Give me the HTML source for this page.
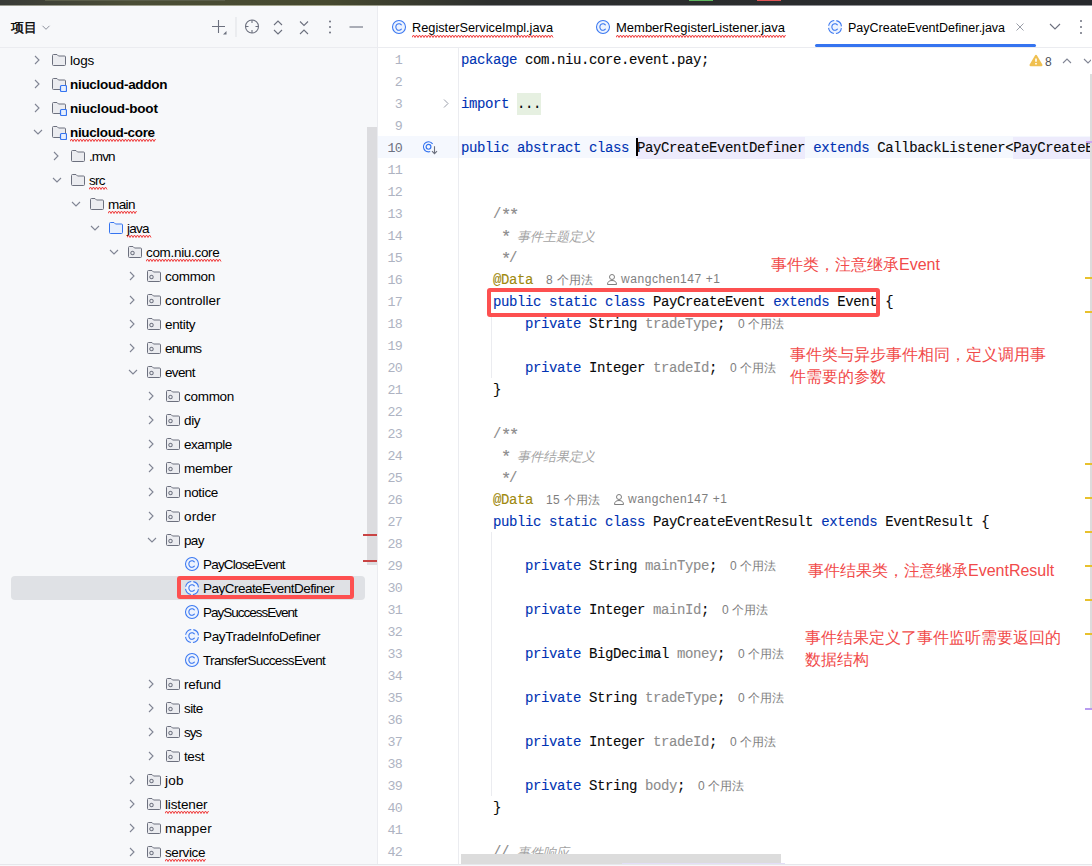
<!DOCTYPE html><html><head><meta charset="utf-8"><style>
*{margin:0;padding:0;box-sizing:border-box}
html,body{width:1092px;height:866px;overflow:hidden;background:#f7f8fa;font-family:"Liberation Sans", sans-serif}
.a{position:absolute;white-space:pre}
.t{position:absolute;white-space:pre;font-size:13px;color:#000;line-height:16px}
.tr{position:absolute;white-space:pre;font-size:13.5px;letter-spacing:-0.25px;color:#000;line-height:16px}
.c{position:absolute;white-space:pre;font-family:"Liberation Mono", monospace;font-size:14px;letter-spacing:-0.4px;line-height:22px;color:#080808;-webkit-text-stroke:0.1px currentColor}
.ln{position:absolute;font-family:"Liberation Mono", monospace;font-size:13.33px;letter-spacing:-0.7px;line-height:22px;color:#aeb3c2;text-align:right;width:40px}
.kw{color:#0033b3}
.gr{color:#8c8c8c}
.an{color:#9e880d}
.cm{color:#8c8c8c}
.ast{font-size:17px;letter-spacing:-2.2px;position:relative;top:2px;-webkit-text-stroke:0.2px currentColor}
.ci{font-style:italic;color:#a3a3a3;-webkit-text-stroke:0;font-size:13px;letter-spacing:0;position:relative;top:1px}
.hint{font-family:"Liberation Sans", sans-serif;font-size:12px;color:#7e7e7e}
.red{position:absolute;white-space:pre;color:#f14a4a;font-size:16px;line-height:21.5px}
</style></head><body>

<div class="a" style="left:0;top:0;width:1092px;height:5px;background:linear-gradient(90deg,#393b37 0%,#4b4e36 12%,#46492f 30%,#2d2f2e 45%,#27292d 100%)"></div>
<div class="a" style="left:45px;top:0;width:180px;height:1px;background:#5b5e4a"></div>
<div class="a" style="left:689px;top:0;width:24px;height:1px;background:#5fb760"></div>
<div class="a" style="left:757px;top:0;width:24px;height:1px;background:#e05555"></div>
<div class="a" style="left:0;top:5px;width:1092px;height:1px;background:linear-gradient(90deg,#9a9b90 0%,#a2a38a 30%,#8f9094 45%,#8f9094 100%)"></div>
<div class="a" style="left:0;top:47px;width:378px;height:1px;background:#ebecf0"></div>
<div class="t" style="left:11px;top:20px;font-size:12.5px;font-weight:normal;color:#000;-webkit-text-stroke:0.35px #000">项目</div>
<svg class="a" style="left:41px;top:24px" width="10" height="8" viewBox="0 0 10 8"><path d="M1.5 1.8 L5 5.3 L8.5 1.8" fill="none" stroke="#8c909c" stroke-width="1"/></svg>
<svg class="a" style="left:208px;top:17px" width="160" height="20" viewBox="0 0 160 20"><path d="M4 9.5 H17 M10.5 3 V16" stroke="#6c707e" stroke-width="1.1" fill="none"/><path d="M15 17.5 L18.5 17.5 L18.5 14 Z" fill="#6c707e"/><path d="M28 0 V20" stroke="#dfe1e5" stroke-width="1"/><circle cx="44" cy="9.5" r="6.5" stroke="#6c707e" stroke-width="1.1" fill="none"/><path d="M44 3 V6 M44 13 V16 M37.5 9.5 H40.5 M47.5 9.5 H50.5" stroke="#6c707e" stroke-width="1.1"/><path d="M66 8 L70 4 L74 8 M66 13 L70 17 L74 13" stroke="#6c707e" stroke-width="1.1" fill="none"/><path d="M92 4.5 L96 8.5 L100 4.5 M92 17 L96 13 L100 17" stroke="#6c707e" stroke-width="1.1" fill="none"/><circle cx="122" cy="4.5" r="1" fill="#6c707e"/><circle cx="122" cy="10" r="1" fill="#6c707e"/><circle cx="122" cy="15.5" r="1" fill="#6c707e"/><path d="M141.5 10 H155" stroke="#6c707e" stroke-width="1.1"/></svg>
<div class="a" style="left:11px;top:576px;width:354px;height:24px;background:#dfe1e5;border-radius:4px"></div>
<div class="a" style="left:367px;top:127px;width:10px;height:438px;background:#dcdcdf"></div>
<div class="a" style="left:363px;top:534px;width:15px;height:2px;background:#c94444"></div>
<div class="a" style="left:363px;top:560px;width:15px;height:2px;background:#c94444"></div>
<svg style="position:absolute;left:33px;top:54px" width="8" height="12" viewBox="0 0 8 12"><path d="M2 2 L6 6 L2 10" fill="none" stroke="#818594" stroke-width="1.1"/></svg>
<svg style="position:absolute;left:51px;top:53px" width="16" height="16" viewBox="0 0 16 16"><path d="M1.5 2.5 Q1.5 1.5 2.5 1.5 H6 L7.5 3 H13.5 Q14.5 3 14.5 4 V11.5 Q14.5 12.5 13.5 12.5 H2.5 Q1.5 12.5 1.5 11.5 Z" fill="#ebecf0" stroke="#6c707e" stroke-width="1"/></svg>
<div class="tr" style="left:70px;top:53px;font-weight:normal;letter-spacing:-0.15px">logs</div>
<svg style="position:absolute;left:33px;top:78px" width="8" height="12" viewBox="0 0 8 12"><path d="M2 2 L6 6 L2 10" fill="none" stroke="#818594" stroke-width="1.1"/></svg>
<svg style="position:absolute;left:51px;top:77px" width="16" height="16" viewBox="0 0 16 16"><path d="M1.5 2.5 Q1.5 1.5 2.5 1.5 H6 L7.5 3 H13.5 Q14.5 3 14.5 4 V11.5 Q14.5 12.5 13.5 12.5 H2.5 Q1.5 12.5 1.5 11.5 Z" fill="#ebecf0" stroke="#6c707e" stroke-width="1"/><rect x="9.5" y="8.5" width="6" height="6" rx="1" fill="#e7effd" stroke="#3574f0" stroke-width="1.2"/></svg>
<div class="tr" style="left:70px;top:77px;font-weight:bold;letter-spacing:-0.29px">niucloud-addon</div>
<svg style="position:absolute;left:33px;top:102px" width="8" height="12" viewBox="0 0 8 12"><path d="M2 2 L6 6 L2 10" fill="none" stroke="#818594" stroke-width="1.1"/></svg>
<svg style="position:absolute;left:51px;top:101px" width="16" height="16" viewBox="0 0 16 16"><path d="M1.5 2.5 Q1.5 1.5 2.5 1.5 H6 L7.5 3 H13.5 Q14.5 3 14.5 4 V11.5 Q14.5 12.5 13.5 12.5 H2.5 Q1.5 12.5 1.5 11.5 Z" fill="#ebecf0" stroke="#6c707e" stroke-width="1"/><rect x="9.5" y="8.5" width="6" height="6" rx="1" fill="#e7effd" stroke="#3574f0" stroke-width="1.2"/></svg>
<div class="tr" style="left:70px;top:101px;font-weight:bold;letter-spacing:-0.17px">niucloud-boot</div>
<svg style="position:absolute;left:32px;top:128px" width="12" height="8" viewBox="0 0 12 8"><path d="M2 2 L6 6 L10 2" fill="none" stroke="#818594" stroke-width="1.1"/></svg>
<svg style="position:absolute;left:51px;top:125px" width="16" height="16" viewBox="0 0 16 16"><path d="M1.5 2.5 Q1.5 1.5 2.5 1.5 H6 L7.5 3 H13.5 Q14.5 3 14.5 4 V11.5 Q14.5 12.5 13.5 12.5 H2.5 Q1.5 12.5 1.5 11.5 Z" fill="#ebecf0" stroke="#6c707e" stroke-width="1"/><rect x="9.5" y="8.5" width="6" height="6" rx="1" fill="#e7effd" stroke="#3574f0" stroke-width="1.2"/></svg>
<div class="tr" style="left:70px;top:125px;font-weight:bold;letter-spacing:-0.35px">niucloud-core</div>
<svg style="position:absolute;left:52px;top:150px" width="8" height="12" viewBox="0 0 8 12"><path d="M2 2 L6 6 L2 10" fill="none" stroke="#818594" stroke-width="1.1"/></svg>
<svg style="position:absolute;left:70px;top:149px" width="16" height="16" viewBox="0 0 16 16"><path d="M1.5 2.5 Q1.5 1.5 2.5 1.5 H6 L7.5 3 H13.5 Q14.5 3 14.5 4 V11.5 Q14.5 12.5 13.5 12.5 H2.5 Q1.5 12.5 1.5 11.5 Z" fill="#ebecf0" stroke="#6c707e" stroke-width="1"/></svg>
<div class="tr" style="left:89px;top:149px;font-weight:normal;letter-spacing:-0.88px">.mvn</div>
<svg style="position:absolute;left:51px;top:176px" width="12" height="8" viewBox="0 0 12 8"><path d="M2 2 L6 6 L10 2" fill="none" stroke="#818594" stroke-width="1.1"/></svg>
<svg style="position:absolute;left:70px;top:173px" width="16" height="16" viewBox="0 0 16 16"><path d="M1.5 2.5 Q1.5 1.5 2.5 1.5 H6 L7.5 3 H13.5 Q14.5 3 14.5 4 V11.5 Q14.5 12.5 13.5 12.5 H2.5 Q1.5 12.5 1.5 11.5 Z" fill="#ebecf0" stroke="#6c707e" stroke-width="1"/></svg>
<div class="tr" style="left:89px;top:173px;font-weight:normal;letter-spacing:-0.75px">src</div>
<svg style="position:absolute;left:70px;top:200px" width="12" height="8" viewBox="0 0 12 8"><path d="M2 2 L6 6 L10 2" fill="none" stroke="#818594" stroke-width="1.1"/></svg>
<svg style="position:absolute;left:89px;top:197px" width="16" height="16" viewBox="0 0 16 16"><path d="M1.5 2.5 Q1.5 1.5 2.5 1.5 H6 L7.5 3 H13.5 Q14.5 3 14.5 4 V11.5 Q14.5 12.5 13.5 12.5 H2.5 Q1.5 12.5 1.5 11.5 Z" fill="#ebecf0" stroke="#6c707e" stroke-width="1"/></svg>
<div class="tr" style="left:108px;top:197px;font-weight:normal;letter-spacing:-0.58px">main</div>
<svg style="position:absolute;left:89px;top:224px" width="12" height="8" viewBox="0 0 12 8"><path d="M2 2 L6 6 L10 2" fill="none" stroke="#818594" stroke-width="1.1"/></svg>
<svg style="position:absolute;left:108px;top:221px" width="16" height="16" viewBox="0 0 16 16"><path d="M1.5 2.5 Q1.5 1.5 2.5 1.5 H6 L7.5 3 H13.5 Q14.5 3 14.5 4 V11.5 Q14.5 12.5 13.5 12.5 H2.5 Q1.5 12.5 1.5 11.5 Z" fill="#e7effd" stroke="#3574f0" stroke-width="1"/></svg>
<div class="tr" style="left:127px;top:221px;font-weight:normal;letter-spacing:-0.75px">java</div>
<svg style="position:absolute;left:108px;top:248px" width="12" height="8" viewBox="0 0 12 8"><path d="M2 2 L6 6 L10 2" fill="none" stroke="#818594" stroke-width="1.1"/></svg>
<svg style="position:absolute;left:127px;top:245px" width="16" height="16" viewBox="0 0 16 16"><path d="M1.5 2.5 Q1.5 1.5 2.5 1.5 H6 L7.5 3 H13.5 Q14.5 3 14.5 4 V11.5 Q14.5 12.5 13.5 12.5 H2.5 Q1.5 12.5 1.5 11.5 Z" fill="#ebecf0" stroke="#6c707e" stroke-width="1"/><circle cx="5.5" cy="8" r="1.7" fill="none" stroke="#6c707e" stroke-width="1.05"/></svg>
<div class="tr" style="left:146px;top:245px;font-weight:normal;letter-spacing:-0.32px">com.niu.core</div>
<svg style="position:absolute;left:128px;top:270px" width="8" height="12" viewBox="0 0 8 12"><path d="M2 2 L6 6 L2 10" fill="none" stroke="#818594" stroke-width="1.1"/></svg>
<svg style="position:absolute;left:146px;top:269px" width="16" height="16" viewBox="0 0 16 16"><path d="M1.5 2.5 Q1.5 1.5 2.5 1.5 H6 L7.5 3 H13.5 Q14.5 3 14.5 4 V11.5 Q14.5 12.5 13.5 12.5 H2.5 Q1.5 12.5 1.5 11.5 Z" fill="#ebecf0" stroke="#6c707e" stroke-width="1"/><circle cx="5.5" cy="8" r="1.7" fill="none" stroke="#6c707e" stroke-width="1.05"/></svg>
<div class="tr" style="left:165px;top:269px;font-weight:normal;letter-spacing:-0.29px">common</div>
<svg style="position:absolute;left:128px;top:294px" width="8" height="12" viewBox="0 0 8 12"><path d="M2 2 L6 6 L2 10" fill="none" stroke="#818594" stroke-width="1.1"/></svg>
<svg style="position:absolute;left:146px;top:293px" width="16" height="16" viewBox="0 0 16 16"><path d="M1.5 2.5 Q1.5 1.5 2.5 1.5 H6 L7.5 3 H13.5 Q14.5 3 14.5 4 V11.5 Q14.5 12.5 13.5 12.5 H2.5 Q1.5 12.5 1.5 11.5 Z" fill="#ebecf0" stroke="#6c707e" stroke-width="1"/><circle cx="5.5" cy="8" r="1.7" fill="none" stroke="#6c707e" stroke-width="1.05"/></svg>
<div class="tr" style="left:165px;top:293px;font-weight:normal;letter-spacing:-0.01px">controller</div>
<svg style="position:absolute;left:128px;top:318px" width="8" height="12" viewBox="0 0 8 12"><path d="M2 2 L6 6 L2 10" fill="none" stroke="#818594" stroke-width="1.1"/></svg>
<svg style="position:absolute;left:146px;top:317px" width="16" height="16" viewBox="0 0 16 16"><path d="M1.5 2.5 Q1.5 1.5 2.5 1.5 H6 L7.5 3 H13.5 Q14.5 3 14.5 4 V11.5 Q14.5 12.5 13.5 12.5 H2.5 Q1.5 12.5 1.5 11.5 Z" fill="#ebecf0" stroke="#6c707e" stroke-width="1"/><circle cx="5.5" cy="8" r="1.7" fill="none" stroke="#6c707e" stroke-width="1.05"/></svg>
<div class="tr" style="left:165px;top:317px;font-weight:normal;letter-spacing:-0.33px">entity</div>
<svg style="position:absolute;left:128px;top:342px" width="8" height="12" viewBox="0 0 8 12"><path d="M2 2 L6 6 L2 10" fill="none" stroke="#818594" stroke-width="1.1"/></svg>
<svg style="position:absolute;left:146px;top:341px" width="16" height="16" viewBox="0 0 16 16"><path d="M1.5 2.5 Q1.5 1.5 2.5 1.5 H6 L7.5 3 H13.5 Q14.5 3 14.5 4 V11.5 Q14.5 12.5 13.5 12.5 H2.5 Q1.5 12.5 1.5 11.5 Z" fill="#ebecf0" stroke="#6c707e" stroke-width="1"/><circle cx="5.5" cy="8" r="1.7" fill="none" stroke="#6c707e" stroke-width="1.05"/></svg>
<div class="tr" style="left:165px;top:341px;font-weight:normal;letter-spacing:-0.88px">enums</div>
<svg style="position:absolute;left:127px;top:368px" width="12" height="8" viewBox="0 0 12 8"><path d="M2 2 L6 6 L10 2" fill="none" stroke="#818594" stroke-width="1.1"/></svg>
<svg style="position:absolute;left:146px;top:365px" width="16" height="16" viewBox="0 0 16 16"><path d="M1.5 2.5 Q1.5 1.5 2.5 1.5 H6 L7.5 3 H13.5 Q14.5 3 14.5 4 V11.5 Q14.5 12.5 13.5 12.5 H2.5 Q1.5 12.5 1.5 11.5 Z" fill="#ebecf0" stroke="#6c707e" stroke-width="1"/><circle cx="5.5" cy="8" r="1.7" fill="none" stroke="#6c707e" stroke-width="1.05"/></svg>
<div class="tr" style="left:165px;top:365px;font-weight:normal;letter-spacing:-0.65px">event</div>
<svg style="position:absolute;left:147px;top:390px" width="8" height="12" viewBox="0 0 8 12"><path d="M2 2 L6 6 L2 10" fill="none" stroke="#818594" stroke-width="1.1"/></svg>
<svg style="position:absolute;left:165px;top:389px" width="16" height="16" viewBox="0 0 16 16"><path d="M1.5 2.5 Q1.5 1.5 2.5 1.5 H6 L7.5 3 H13.5 Q14.5 3 14.5 4 V11.5 Q14.5 12.5 13.5 12.5 H2.5 Q1.5 12.5 1.5 11.5 Z" fill="#ebecf0" stroke="#6c707e" stroke-width="1"/><circle cx="5.5" cy="8" r="1.7" fill="none" stroke="#6c707e" stroke-width="1.05"/></svg>
<div class="tr" style="left:184px;top:389px;font-weight:normal;letter-spacing:-0.29px">common</div>
<svg style="position:absolute;left:147px;top:414px" width="8" height="12" viewBox="0 0 8 12"><path d="M2 2 L6 6 L2 10" fill="none" stroke="#818594" stroke-width="1.1"/></svg>
<svg style="position:absolute;left:165px;top:413px" width="16" height="16" viewBox="0 0 16 16"><path d="M1.5 2.5 Q1.5 1.5 2.5 1.5 H6 L7.5 3 H13.5 Q14.5 3 14.5 4 V11.5 Q14.5 12.5 13.5 12.5 H2.5 Q1.5 12.5 1.5 11.5 Z" fill="#ebecf0" stroke="#6c707e" stroke-width="1"/><circle cx="5.5" cy="8" r="1.7" fill="none" stroke="#6c707e" stroke-width="1.05"/></svg>
<div class="tr" style="left:184px;top:413px;font-weight:normal;letter-spacing:-0.32px">diy</div>
<svg style="position:absolute;left:147px;top:438px" width="8" height="12" viewBox="0 0 8 12"><path d="M2 2 L6 6 L2 10" fill="none" stroke="#818594" stroke-width="1.1"/></svg>
<svg style="position:absolute;left:165px;top:437px" width="16" height="16" viewBox="0 0 16 16"><path d="M1.5 2.5 Q1.5 1.5 2.5 1.5 H6 L7.5 3 H13.5 Q14.5 3 14.5 4 V11.5 Q14.5 12.5 13.5 12.5 H2.5 Q1.5 12.5 1.5 11.5 Z" fill="#ebecf0" stroke="#6c707e" stroke-width="1"/><circle cx="5.5" cy="8" r="1.7" fill="none" stroke="#6c707e" stroke-width="1.05"/></svg>
<div class="tr" style="left:184px;top:437px;font-weight:normal;letter-spacing:-0.45px">example</div>
<svg style="position:absolute;left:147px;top:462px" width="8" height="12" viewBox="0 0 8 12"><path d="M2 2 L6 6 L2 10" fill="none" stroke="#818594" stroke-width="1.1"/></svg>
<svg style="position:absolute;left:165px;top:461px" width="16" height="16" viewBox="0 0 16 16"><path d="M1.5 2.5 Q1.5 1.5 2.5 1.5 H6 L7.5 3 H13.5 Q14.5 3 14.5 4 V11.5 Q14.5 12.5 13.5 12.5 H2.5 Q1.5 12.5 1.5 11.5 Z" fill="#ebecf0" stroke="#6c707e" stroke-width="1"/><circle cx="5.5" cy="8" r="1.7" fill="none" stroke="#6c707e" stroke-width="1.05"/></svg>
<div class="tr" style="left:184px;top:461px;font-weight:normal;letter-spacing:-0.2px">member</div>
<svg style="position:absolute;left:147px;top:486px" width="8" height="12" viewBox="0 0 8 12"><path d="M2 2 L6 6 L2 10" fill="none" stroke="#818594" stroke-width="1.1"/></svg>
<svg style="position:absolute;left:165px;top:485px" width="16" height="16" viewBox="0 0 16 16"><path d="M1.5 2.5 Q1.5 1.5 2.5 1.5 H6 L7.5 3 H13.5 Q14.5 3 14.5 4 V11.5 Q14.5 12.5 13.5 12.5 H2.5 Q1.5 12.5 1.5 11.5 Z" fill="#ebecf0" stroke="#6c707e" stroke-width="1"/><circle cx="5.5" cy="8" r="1.7" fill="none" stroke="#6c707e" stroke-width="1.05"/></svg>
<div class="tr" style="left:184px;top:485px;font-weight:normal;letter-spacing:-0.34px">notice</div>
<svg style="position:absolute;left:147px;top:510px" width="8" height="12" viewBox="0 0 8 12"><path d="M2 2 L6 6 L2 10" fill="none" stroke="#818594" stroke-width="1.1"/></svg>
<svg style="position:absolute;left:165px;top:509px" width="16" height="16" viewBox="0 0 16 16"><path d="M1.5 2.5 Q1.5 1.5 2.5 1.5 H6 L7.5 3 H13.5 Q14.5 3 14.5 4 V11.5 Q14.5 12.5 13.5 12.5 H2.5 Q1.5 12.5 1.5 11.5 Z" fill="#ebecf0" stroke="#6c707e" stroke-width="1"/><circle cx="5.5" cy="8" r="1.7" fill="none" stroke="#6c707e" stroke-width="1.05"/></svg>
<div class="tr" style="left:184px;top:509px;font-weight:normal;letter-spacing:0.12px">order</div>
<svg style="position:absolute;left:146px;top:536px" width="12" height="8" viewBox="0 0 12 8"><path d="M2 2 L6 6 L10 2" fill="none" stroke="#818594" stroke-width="1.1"/></svg>
<svg style="position:absolute;left:165px;top:533px" width="16" height="16" viewBox="0 0 16 16"><path d="M1.5 2.5 Q1.5 1.5 2.5 1.5 H6 L7.5 3 H13.5 Q14.5 3 14.5 4 V11.5 Q14.5 12.5 13.5 12.5 H2.5 Q1.5 12.5 1.5 11.5 Z" fill="#ebecf0" stroke="#6c707e" stroke-width="1"/><circle cx="5.5" cy="8" r="1.7" fill="none" stroke="#6c707e" stroke-width="1.05"/></svg>
<div class="tr" style="left:184px;top:533px;font-weight:normal;letter-spacing:-0.68px">pay</div>
<svg style="position:absolute;left:184px;top:556px" width="16" height="16" viewBox="0 0 16 16"><circle cx="8" cy="8" r="6.5" fill="#edf3fe" stroke="#3b78f1" stroke-width="1.05"/><path d="M10.6 6.3 A3.1 3.3 0 1 0 10.6 9.7" fill="none" stroke="#3574f0" stroke-width="1.05"/></svg>
<div class="tr" style="left:203px;top:557px;font-weight:normal;letter-spacing:-0.81px">PayCloseEvent</div>
<svg style="position:absolute;left:184px;top:580px" width="16" height="16" viewBox="0 0 16 16"><circle cx="8" cy="8" r="6.5" fill="#edf3fe" stroke="#3b78f1" stroke-width="1.05" stroke-dasharray="7.85 2.2" stroke-dashoffset="8.95"/><path d="M10.6 6.3 A3.1 3.3 0 1 0 10.6 9.7" fill="none" stroke="#3574f0" stroke-width="1.05"/></svg>
<div class="tr" style="left:203px;top:581px;font-weight:normal;letter-spacing:-0.52px">PayCreateEventDefiner</div>
<svg style="position:absolute;left:184px;top:604px" width="16" height="16" viewBox="0 0 16 16"><circle cx="8" cy="8" r="6.5" fill="#edf3fe" stroke="#3b78f1" stroke-width="1.05"/><path d="M10.6 6.3 A3.1 3.3 0 1 0 10.6 9.7" fill="none" stroke="#3574f0" stroke-width="1.05"/></svg>
<div class="tr" style="left:203px;top:605px;font-weight:normal;letter-spacing:-1.0px">PaySuccessEvent</div>
<svg style="position:absolute;left:184px;top:628px" width="16" height="16" viewBox="0 0 16 16"><circle cx="8" cy="8" r="6.5" fill="#edf3fe" stroke="#3b78f1" stroke-width="1.05" stroke-dasharray="7.85 2.2" stroke-dashoffset="8.95"/><path d="M10.6 6.3 A3.1 3.3 0 1 0 10.6 9.7" fill="none" stroke="#3574f0" stroke-width="1.05"/></svg>
<div class="tr" style="left:203px;top:629px;font-weight:normal;letter-spacing:-0.37px">PayTradeInfoDefiner</div>
<svg style="position:absolute;left:184px;top:652px" width="16" height="16" viewBox="0 0 16 16"><circle cx="8" cy="8" r="6.5" fill="#edf3fe" stroke="#3b78f1" stroke-width="1.05"/><path d="M10.6 6.3 A3.1 3.3 0 1 0 10.6 9.7" fill="none" stroke="#3574f0" stroke-width="1.05"/></svg>
<div class="tr" style="left:203px;top:653px;font-weight:normal;letter-spacing:-0.66px">TransferSuccessEvent</div>
<svg style="position:absolute;left:147px;top:678px" width="8" height="12" viewBox="0 0 8 12"><path d="M2 2 L6 6 L2 10" fill="none" stroke="#818594" stroke-width="1.1"/></svg>
<svg style="position:absolute;left:165px;top:677px" width="16" height="16" viewBox="0 0 16 16"><path d="M1.5 2.5 Q1.5 1.5 2.5 1.5 H6 L7.5 3 H13.5 Q14.5 3 14.5 4 V11.5 Q14.5 12.5 13.5 12.5 H2.5 Q1.5 12.5 1.5 11.5 Z" fill="#ebecf0" stroke="#6c707e" stroke-width="1"/><circle cx="5.5" cy="8" r="1.7" fill="none" stroke="#6c707e" stroke-width="1.05"/></svg>
<div class="tr" style="left:184px;top:677px;font-weight:normal;letter-spacing:-0.25px">refund</div>
<svg style="position:absolute;left:147px;top:702px" width="8" height="12" viewBox="0 0 8 12"><path d="M2 2 L6 6 L2 10" fill="none" stroke="#818594" stroke-width="1.1"/></svg>
<svg style="position:absolute;left:165px;top:701px" width="16" height="16" viewBox="0 0 16 16"><path d="M1.5 2.5 Q1.5 1.5 2.5 1.5 H6 L7.5 3 H13.5 Q14.5 3 14.5 4 V11.5 Q14.5 12.5 13.5 12.5 H2.5 Q1.5 12.5 1.5 11.5 Z" fill="#ebecf0" stroke="#6c707e" stroke-width="1"/><circle cx="5.5" cy="8" r="1.7" fill="none" stroke="#6c707e" stroke-width="1.05"/></svg>
<div class="tr" style="left:184px;top:701px;font-weight:normal;letter-spacing:-0.57px">site</div>
<svg style="position:absolute;left:147px;top:726px" width="8" height="12" viewBox="0 0 8 12"><path d="M2 2 L6 6 L2 10" fill="none" stroke="#818594" stroke-width="1.1"/></svg>
<svg style="position:absolute;left:165px;top:725px" width="16" height="16" viewBox="0 0 16 16"><path d="M1.5 2.5 Q1.5 1.5 2.5 1.5 H6 L7.5 3 H13.5 Q14.5 3 14.5 4 V11.5 Q14.5 12.5 13.5 12.5 H2.5 Q1.5 12.5 1.5 11.5 Z" fill="#ebecf0" stroke="#6c707e" stroke-width="1"/><circle cx="5.5" cy="8" r="1.7" fill="none" stroke="#6c707e" stroke-width="1.05"/></svg>
<div class="tr" style="left:184px;top:725px;font-weight:normal;letter-spacing:-1.0px">sys</div>
<svg style="position:absolute;left:147px;top:750px" width="8" height="12" viewBox="0 0 8 12"><path d="M2 2 L6 6 L2 10" fill="none" stroke="#818594" stroke-width="1.1"/></svg>
<svg style="position:absolute;left:165px;top:749px" width="16" height="16" viewBox="0 0 16 16"><path d="M1.5 2.5 Q1.5 1.5 2.5 1.5 H6 L7.5 3 H13.5 Q14.5 3 14.5 4 V11.5 Q14.5 12.5 13.5 12.5 H2.5 Q1.5 12.5 1.5 11.5 Z" fill="#ebecf0" stroke="#6c707e" stroke-width="1"/><circle cx="5.5" cy="8" r="1.7" fill="none" stroke="#6c707e" stroke-width="1.05"/></svg>
<div class="tr" style="left:184px;top:749px;font-weight:normal;letter-spacing:-0.38px">test</div>
<svg style="position:absolute;left:128px;top:774px" width="8" height="12" viewBox="0 0 8 12"><path d="M2 2 L6 6 L2 10" fill="none" stroke="#818594" stroke-width="1.1"/></svg>
<svg style="position:absolute;left:146px;top:773px" width="16" height="16" viewBox="0 0 16 16"><path d="M1.5 2.5 Q1.5 1.5 2.5 1.5 H6 L7.5 3 H13.5 Q14.5 3 14.5 4 V11.5 Q14.5 12.5 13.5 12.5 H2.5 Q1.5 12.5 1.5 11.5 Z" fill="#ebecf0" stroke="#6c707e" stroke-width="1"/><circle cx="5.5" cy="8" r="1.7" fill="none" stroke="#6c707e" stroke-width="1.05"/></svg>
<div class="tr" style="left:165px;top:773px;font-weight:normal;letter-spacing:0.3px">job</div>
<svg style="position:absolute;left:128px;top:798px" width="8" height="12" viewBox="0 0 8 12"><path d="M2 2 L6 6 L2 10" fill="none" stroke="#818594" stroke-width="1.1"/></svg>
<svg style="position:absolute;left:146px;top:797px" width="16" height="16" viewBox="0 0 16 16"><path d="M1.5 2.5 Q1.5 1.5 2.5 1.5 H6 L7.5 3 H13.5 Q14.5 3 14.5 4 V11.5 Q14.5 12.5 13.5 12.5 H2.5 Q1.5 12.5 1.5 11.5 Z" fill="#ebecf0" stroke="#6c707e" stroke-width="1"/><circle cx="5.5" cy="8" r="1.7" fill="none" stroke="#6c707e" stroke-width="1.05"/></svg>
<div class="tr" style="left:165px;top:797px;font-weight:normal;letter-spacing:-0.13px">listener</div>
<svg style="position:absolute;left:128px;top:822px" width="8" height="12" viewBox="0 0 8 12"><path d="M2 2 L6 6 L2 10" fill="none" stroke="#818594" stroke-width="1.1"/></svg>
<svg style="position:absolute;left:146px;top:821px" width="16" height="16" viewBox="0 0 16 16"><path d="M1.5 2.5 Q1.5 1.5 2.5 1.5 H6 L7.5 3 H13.5 Q14.5 3 14.5 4 V11.5 Q14.5 12.5 13.5 12.5 H2.5 Q1.5 12.5 1.5 11.5 Z" fill="#ebecf0" stroke="#6c707e" stroke-width="1"/><circle cx="5.5" cy="8" r="1.7" fill="none" stroke="#6c707e" stroke-width="1.05"/></svg>
<div class="tr" style="left:165px;top:821px;font-weight:normal;letter-spacing:0.17px">mapper</div>
<svg style="position:absolute;left:128px;top:846px" width="8" height="12" viewBox="0 0 8 12"><path d="M2 2 L6 6 L2 10" fill="none" stroke="#818594" stroke-width="1.1"/></svg>
<svg style="position:absolute;left:146px;top:845px" width="16" height="16" viewBox="0 0 16 16"><path d="M1.5 2.5 Q1.5 1.5 2.5 1.5 H6 L7.5 3 H13.5 Q14.5 3 14.5 4 V11.5 Q14.5 12.5 13.5 12.5 H2.5 Q1.5 12.5 1.5 11.5 Z" fill="#ebecf0" stroke="#6c707e" stroke-width="1"/><circle cx="5.5" cy="8" r="1.7" fill="none" stroke="#6c707e" stroke-width="1.05"/></svg>
<div class="tr" style="left:165px;top:845px;font-weight:normal;letter-spacing:-0.39px">service</div>
<svg class="a" style="left:70px;top:138px" width="87" height="5" viewBox="0 0 87 5"><path d="M0 3.5 L1.5 1 L3.0 3.5 L4.5 1 L6.0 3.5 L7.5 1 L9.0 3.5 L10.5 1 L12.0 3.5 L13.5 1 L15.0 3.5 L16.5 1 L18.0 3.5 L19.5 1 L21.0 3.5 L22.5 1 L24.0 3.5 L25.5 1 L27.0 3.5 L28.5 1 L30.0 3.5 L31.5 1 L33.0 3.5 L34.5 1 L36.0 3.5 L37.5 1 L39.0 3.5 L40.5 1 L42.0 3.5 L43.5 1 L45.0 3.5 L46.5 1 L48.0 3.5 L49.5 1 L51.0 3.5 L52.5 1 L54.0 3.5 L55.5 1 L57.0 3.5 L58.5 1 L60.0 3.5 L61.5 1 L63.0 3.5 L64.5 1 L66.0 3.5 L67.5 1 L69.0 3.5 L70.5 1 L72.0 3.5 L73.5 1 L75.0 3.5 L76.5 1 L78.0 3.5 L79.5 1 L81.0 3.5 L82.5 1 L84.0 3.5 L85.5 1" fill="none" stroke="#f03c3c" stroke-width="1"/></svg>
<svg class="a" style="left:89px;top:186px" width="19" height="5" viewBox="0 0 19 5"><path d="M0 3.5 L1.5 1 L3.0 3.5 L4.5 1 L6.0 3.5 L7.5 1 L9.0 3.5 L10.5 1 L12.0 3.5 L13.5 1 L15.0 3.5 L16.5 1 L18.0 3.5" fill="none" stroke="#f03c3c" stroke-width="1"/></svg>
<svg class="a" style="left:108px;top:210px" width="30" height="5" viewBox="0 0 30 5"><path d="M0 3.5 L1.5 1 L3.0 3.5 L4.5 1 L6.0 3.5 L7.5 1 L9.0 3.5 L10.5 1 L12.0 3.5 L13.5 1 L15.0 3.5 L16.5 1 L18.0 3.5 L19.5 1 L21.0 3.5 L22.5 1 L24.0 3.5 L25.5 1 L27.0 3.5 L28.5 1" fill="none" stroke="#f03c3c" stroke-width="1"/></svg>
<svg class="a" style="left:127px;top:234px" width="25" height="5" viewBox="0 0 25 5"><path d="M0 3.5 L1.5 1 L3.0 3.5 L4.5 1 L6.0 3.5 L7.5 1 L9.0 3.5 L10.5 1 L12.0 3.5 L13.5 1 L15.0 3.5 L16.5 1 L18.0 3.5 L19.5 1 L21.0 3.5 L22.5 1 L24.0 3.5" fill="none" stroke="#f03c3c" stroke-width="1"/></svg>
<svg class="a" style="left:146px;top:258px" width="76" height="5" viewBox="0 0 76 5"><path d="M0 3.5 L1.5 1 L3.0 3.5 L4.5 1 L6.0 3.5 L7.5 1 L9.0 3.5 L10.5 1 L12.0 3.5 L13.5 1 L15.0 3.5 L16.5 1 L18.0 3.5 L19.5 1 L21.0 3.5 L22.5 1 L24.0 3.5 L25.5 1 L27.0 3.5 L28.5 1 L30.0 3.5 L31.5 1 L33.0 3.5 L34.5 1 L36.0 3.5 L37.5 1 L39.0 3.5 L40.5 1 L42.0 3.5 L43.5 1 L45.0 3.5 L46.5 1 L48.0 3.5 L49.5 1 L51.0 3.5 L52.5 1 L54.0 3.5 L55.5 1 L57.0 3.5 L58.5 1 L60.0 3.5 L61.5 1 L63.0 3.5 L64.5 1 L66.0 3.5 L67.5 1 L69.0 3.5 L70.5 1 L72.0 3.5 L73.5 1 L75.0 3.5" fill="none" stroke="#f03c3c" stroke-width="1"/></svg>
<svg class="a" style="left:165px;top:810px" width="45" height="5" viewBox="0 0 45 5"><path d="M0 3.5 L1.5 1 L3.0 3.5 L4.5 1 L6.0 3.5 L7.5 1 L9.0 3.5 L10.5 1 L12.0 3.5 L13.5 1 L15.0 3.5 L16.5 1 L18.0 3.5 L19.5 1 L21.0 3.5 L22.5 1 L24.0 3.5 L25.5 1 L27.0 3.5 L28.5 1 L30.0 3.5 L31.5 1 L33.0 3.5 L34.5 1 L36.0 3.5 L37.5 1 L39.0 3.5 L40.5 1 L42.0 3.5 L43.5 1" fill="none" stroke="#f03c3c" stroke-width="1"/></svg>
<svg class="a" style="left:165px;top:858px" width="42" height="5" viewBox="0 0 42 5"><path d="M0 3.5 L1.5 1 L3.0 3.5 L4.5 1 L6.0 3.5 L7.5 1 L9.0 3.5 L10.5 1 L12.0 3.5 L13.5 1 L15.0 3.5 L16.5 1 L18.0 3.5 L19.5 1 L21.0 3.5 L22.5 1 L24.0 3.5 L25.5 1 L27.0 3.5 L28.5 1 L30.0 3.5 L31.5 1 L33.0 3.5 L34.5 1 L36.0 3.5 L37.5 1 L39.0 3.5 L40.5 1" fill="none" stroke="#f03c3c" stroke-width="1"/></svg>
<div class="a" style="left:177px;top:576px;width:177px;height:23px;border:4px solid #fd5050;border-radius:3px"></div>
<div class="a" style="left:377px;top:6px;width:1px;height:860px;background:#ebecf0"></div>
<div class="a" style="left:378px;top:6px;width:714px;height:860px;background:#ffffff"></div>
<div class="a" style="left:378px;top:47px;width:714px;height:1px;background:#ebecf0"></div>
<svg style="position:absolute;left:391px;top:19px" width="16" height="16" viewBox="0 0 16 16"><circle cx="8" cy="8" r="6.5" fill="#edf3fe" stroke="#3b78f1" stroke-width="1.05"/><path d="M10.6 6.3 A3.1 3.3 0 1 0 10.6 9.7" fill="none" stroke="#3574f0" stroke-width="1.05"/></svg>
<div class="t" style="left:412px;top:20px;color:#000;font-size:12.75px">RegisterServiceImpl.java</div>
<svg class="a" style="left:412px;top:34px" width="143" height="5" viewBox="0 0 143 5"><path d="M0 3.5 L1.5 1 L3.0 3.5 L4.5 1 L6.0 3.5 L7.5 1 L9.0 3.5 L10.5 1 L12.0 3.5 L13.5 1 L15.0 3.5 L16.5 1 L18.0 3.5 L19.5 1 L21.0 3.5 L22.5 1 L24.0 3.5 L25.5 1 L27.0 3.5 L28.5 1 L30.0 3.5 L31.5 1 L33.0 3.5 L34.5 1 L36.0 3.5 L37.5 1 L39.0 3.5 L40.5 1 L42.0 3.5 L43.5 1 L45.0 3.5 L46.5 1 L48.0 3.5 L49.5 1 L51.0 3.5 L52.5 1 L54.0 3.5 L55.5 1 L57.0 3.5 L58.5 1 L60.0 3.5 L61.5 1 L63.0 3.5 L64.5 1 L66.0 3.5 L67.5 1 L69.0 3.5 L70.5 1 L72.0 3.5 L73.5 1 L75.0 3.5 L76.5 1 L78.0 3.5 L79.5 1 L81.0 3.5 L82.5 1 L84.0 3.5 L85.5 1 L87.0 3.5 L88.5 1 L90.0 3.5 L91.5 1 L93.0 3.5 L94.5 1 L96.0 3.5 L97.5 1 L99.0 3.5 L100.5 1 L102.0 3.5 L103.5 1 L105.0 3.5 L106.5 1 L108.0 3.5 L109.5 1 L111.0 3.5 L112.5 1 L114.0 3.5 L115.5 1 L117.0 3.5 L118.5 1 L120.0 3.5 L121.5 1 L123.0 3.5 L124.5 1 L126.0 3.5 L127.5 1 L129.0 3.5 L130.5 1 L132.0 3.5 L133.5 1 L135.0 3.5 L136.5 1 L138.0 3.5 L139.5 1 L141.0 3.5" fill="none" stroke="#f03c3c" stroke-width="1"/></svg>

<svg style="position:absolute;left:595px;top:19px" width="16" height="16" viewBox="0 0 16 16"><circle cx="8" cy="8" r="6.5" fill="#edf3fe" stroke="#3b78f1" stroke-width="1.05"/><path d="M10.6 6.3 A3.1 3.3 0 1 0 10.6 9.7" fill="none" stroke="#3574f0" stroke-width="1.05"/></svg>
<div class="t" style="left:616px;top:20px;color:#000">MemberRegisterListener.java</div>
<svg class="a" style="left:616px;top:34px" width="171" height="5" viewBox="0 0 171 5"><path d="M0 3.5 L1.5 1 L3.0 3.5 L4.5 1 L6.0 3.5 L7.5 1 L9.0 3.5 L10.5 1 L12.0 3.5 L13.5 1 L15.0 3.5 L16.5 1 L18.0 3.5 L19.5 1 L21.0 3.5 L22.5 1 L24.0 3.5 L25.5 1 L27.0 3.5 L28.5 1 L30.0 3.5 L31.5 1 L33.0 3.5 L34.5 1 L36.0 3.5 L37.5 1 L39.0 3.5 L40.5 1 L42.0 3.5 L43.5 1 L45.0 3.5 L46.5 1 L48.0 3.5 L49.5 1 L51.0 3.5 L52.5 1 L54.0 3.5 L55.5 1 L57.0 3.5 L58.5 1 L60.0 3.5 L61.5 1 L63.0 3.5 L64.5 1 L66.0 3.5 L67.5 1 L69.0 3.5 L70.5 1 L72.0 3.5 L73.5 1 L75.0 3.5 L76.5 1 L78.0 3.5 L79.5 1 L81.0 3.5 L82.5 1 L84.0 3.5 L85.5 1 L87.0 3.5 L88.5 1 L90.0 3.5 L91.5 1 L93.0 3.5 L94.5 1 L96.0 3.5 L97.5 1 L99.0 3.5 L100.5 1 L102.0 3.5 L103.5 1 L105.0 3.5 L106.5 1 L108.0 3.5 L109.5 1 L111.0 3.5 L112.5 1 L114.0 3.5 L115.5 1 L117.0 3.5 L118.5 1 L120.0 3.5 L121.5 1 L123.0 3.5 L124.5 1 L126.0 3.5 L127.5 1 L129.0 3.5 L130.5 1 L132.0 3.5 L133.5 1 L135.0 3.5 L136.5 1 L138.0 3.5 L139.5 1 L141.0 3.5 L142.5 1 L144.0 3.5 L145.5 1 L147.0 3.5 L148.5 1 L150.0 3.5 L151.5 1 L153.0 3.5 L154.5 1 L156.0 3.5 L157.5 1 L159.0 3.5 L160.5 1 L162.0 3.5 L163.5 1 L165.0 3.5 L166.5 1 L168.0 3.5 L169.5 1" fill="none" stroke="#f03c3c" stroke-width="1"/></svg>

<svg style="position:absolute;left:827px;top:19px" width="16" height="16" viewBox="0 0 16 16"><circle cx="8" cy="8" r="6.5" fill="#edf3fe" stroke="#3b78f1" stroke-width="1.05" stroke-dasharray="7.85 2.2" stroke-dashoffset="8.95"/><path d="M10.6 6.3 A3.1 3.3 0 1 0 10.6 9.7" fill="none" stroke="#3574f0" stroke-width="1.05"/></svg>
<div class="t" style="left:848px;top:20px;color:#000;font-size:12.5px">PayCreateEventDefiner.java</div>
<svg class="a" style="left:1014px;top:21px" width="12" height="12" viewBox="0 0 12 12"><path d="M2.5 2.5 L9.5 9.5 M9.5 2.5 L2.5 9.5" stroke="#9a9ea8" stroke-width="1"/></svg>
<div class="a" style="left:815px;top:44px;width:221px;height:3px;background:#3574f0;border-radius:2px"></div>
<svg class="a" style="left:1048px;top:21px" width="14" height="12" viewBox="0 0 14 12"><path d="M2 3 L7 8 L12 3" stroke="#6c707e" stroke-width="1.1" fill="none"/></svg>
<svg class="a" style="left:1076px;top:18px" width="10" height="18" viewBox="0 0 10 18"><circle cx="5" cy="3" r="1" fill="#6c707e"/><circle cx="5" cy="9" r="1" fill="#6c707e"/><circle cx="5" cy="15" r="1" fill="#6c707e"/></svg>
<div class="a" style="left:378px;top:136px;width:714px;height:22px;background:#f5f8fe"></div>
<div class="a" style="left:458px;top:48px;width:1px;height:818px;background:#ebecf0"></div>
<div class="ln" style="left:362px;top:49.5px;color:#aeb3c2">1</div>
<div class="ln" style="left:362px;top:71.5px;color:#aeb3c2">2</div>
<div class="ln" style="left:362px;top:93.5px;color:#aeb3c2">3</div>
<div class="ln" style="left:362px;top:115.5px;color:#aeb3c2">9</div>
<div class="ln" style="left:362px;top:137.5px;color:#6e7281">10</div>
<div class="ln" style="left:362px;top:159.5px;color:#aeb3c2">11</div>
<div class="ln" style="left:362px;top:181.5px;color:#aeb3c2">12</div>
<div class="ln" style="left:362px;top:203.5px;color:#aeb3c2">13</div>
<div class="ln" style="left:362px;top:225.5px;color:#aeb3c2">14</div>
<div class="ln" style="left:362px;top:247.5px;color:#aeb3c2">15</div>
<div class="ln" style="left:362px;top:269.5px;color:#aeb3c2">16</div>
<div class="ln" style="left:362px;top:291.5px;color:#aeb3c2">17</div>
<div class="ln" style="left:362px;top:313.5px;color:#aeb3c2">18</div>
<div class="ln" style="left:362px;top:335.5px;color:#aeb3c2">19</div>
<div class="ln" style="left:362px;top:357.5px;color:#aeb3c2">20</div>
<div class="ln" style="left:362px;top:379.5px;color:#aeb3c2">21</div>
<div class="ln" style="left:362px;top:401.5px;color:#aeb3c2">22</div>
<div class="ln" style="left:362px;top:423.5px;color:#aeb3c2">23</div>
<div class="ln" style="left:362px;top:445.5px;color:#aeb3c2">24</div>
<div class="ln" style="left:362px;top:467.5px;color:#aeb3c2">25</div>
<div class="ln" style="left:362px;top:489.5px;color:#aeb3c2">26</div>
<div class="ln" style="left:362px;top:511.5px;color:#aeb3c2">27</div>
<div class="ln" style="left:362px;top:533.5px;color:#aeb3c2">28</div>
<div class="ln" style="left:362px;top:555.5px;color:#aeb3c2">29</div>
<div class="ln" style="left:362px;top:577.5px;color:#aeb3c2">30</div>
<div class="ln" style="left:362px;top:599.5px;color:#aeb3c2">31</div>
<div class="ln" style="left:362px;top:621.5px;color:#aeb3c2">32</div>
<div class="ln" style="left:362px;top:643.5px;color:#aeb3c2">33</div>
<div class="ln" style="left:362px;top:665.5px;color:#aeb3c2">34</div>
<div class="ln" style="left:362px;top:687.5px;color:#aeb3c2">35</div>
<div class="ln" style="left:362px;top:709.5px;color:#aeb3c2">36</div>
<div class="ln" style="left:362px;top:731.5px;color:#aeb3c2">37</div>
<div class="ln" style="left:362px;top:753.5px;color:#aeb3c2">38</div>
<div class="ln" style="left:362px;top:775.5px;color:#aeb3c2">39</div>
<div class="ln" style="left:362px;top:797.5px;color:#aeb3c2">40</div>
<div class="ln" style="left:362px;top:819.5px;color:#aeb3c2">41</div>
<div class="ln" style="left:362px;top:841.5px;color:#aeb3c2">42</div>
<div class="c" style="left:461px;top:49px"><span class="kw">package</span> com.niu.core.event.pay;</div>
<div class="c" style="left:461px;top:93px"><span class="kw">import</span> <span style="background:#e6f0e1;display:inline-block;height:22px;vertical-align:top">...</span></div>
<div class="c" style="left:461px;top:137px"><span class="kw">public</span> <span class="kw">abstract</span> <span class="kw">class</span> <span style="background:#edebfc;display:inline-block;height:22px;vertical-align:top">PayCreateEventDefiner</span> <span class="kw">extends</span> CallbackListener&lt;<span style="background:#edebfc;display:inline-block;height:22px;vertical-align:top">PayCreateEventDefiner</span></div>
<div class="c" style="left:461px;top:203px">    <span class="cm">/<span class="ast">*</span><span class="ast">*</span></span></div>
<div class="c" style="left:461px;top:225px">    <span class="cm"> <span class="ast">*</span> <span class="ci">事件主题定义</span></span></div>
<div class="c" style="left:461px;top:247px">    <span class="cm"> <span class="ast">*</span>/</span></div>
<div class="c" style="left:461px;top:269px">    <span class="an">@Data</span></div>
<div class="c" style="left:461px;top:291px">    <span class="kw">public</span> <span class="kw">static</span> <span class="kw">class</span> PayCreateEvent <span class="kw">extends</span> Event {</div>
<div class="c" style="left:461px;top:313px">        <span class="kw">private</span> String <span class="gr">tradeType</span>;</div>
<div class="c" style="left:461px;top:357px">        <span class="kw">private</span> Integer <span class="gr">tradeId</span>;</div>
<div class="c" style="left:461px;top:379px">    }</div>
<div class="c" style="left:461px;top:423px">    <span class="cm">/<span class="ast">*</span><span class="ast">*</span></span></div>
<div class="c" style="left:461px;top:445px">    <span class="cm"> <span class="ast">*</span> <span class="ci">事件结果定义</span></span></div>
<div class="c" style="left:461px;top:467px">    <span class="cm"> <span class="ast">*</span>/</span></div>
<div class="c" style="left:461px;top:489px">    <span class="an">@Data</span></div>
<div class="c" style="left:461px;top:511px">    <span class="kw">public</span> <span class="kw">static</span> <span class="kw">class</span> PayCreateEventResult <span class="kw">extends</span> EventResult {</div>
<div class="c" style="left:461px;top:555px">        <span class="kw">private</span> String <span class="gr">mainType</span>;</div>
<div class="c" style="left:461px;top:599px">        <span class="kw">private</span> Integer <span class="gr">mainId</span>;</div>
<div class="c" style="left:461px;top:643px">        <span class="kw">private</span> BigDecimal <span class="gr">money</span>;</div>
<div class="c" style="left:461px;top:687px">        <span class="kw">private</span> String <span class="gr">tradeType</span>;</div>
<div class="c" style="left:461px;top:731px">        <span class="kw">private</span> Integer <span class="gr">tradeId</span>;</div>
<div class="c" style="left:461px;top:775px">        <span class="kw">private</span> String <span class="gr">body</span>;</div>
<div class="c" style="left:461px;top:797px">    }</div>
<div class="c" style="left:461px;top:841px">    <span class="cm">// <span class="ci">事件响应</span></span></div>
<svg class="a" style="left:442px;top:97px" width="8" height="12" viewBox="0 0 8 12"><path d="M2 2.5 L6 6.5 L2 10.5" fill="none" stroke="#9a9eaa" stroke-width="1"/></svg>
<svg class="a" style="left:415px;top:136px" width="30" height="22" viewBox="0 0 30 22"><path d="M17.6 7.98 A5 5 0 1 0 15.21 15.55" fill="none" stroke="#3574f0" stroke-width="1.2"/><circle cx="13.5" cy="10.85" r="2.4" fill="none" stroke="#3574f0" stroke-width="1.2"/><path d="M19.5 10.2 V17.6 M17 15.2 L19.5 17.7 L22 15.2" stroke="#6c707e" stroke-width="1.1" fill="none"/></svg>
<div class="a" style="left:636px;top:138px;width:2px;height:18px;background:#000"></div>
<div class="a" style="left:491px;top:317px;width:1px;height:61px;background:#ebecf0"></div>
<div class="a" style="left:491px;top:532px;width:1px;height:264px;background:#ebecf0"></div>
<div class="a hint" style="left:546px;top:272px;letter-spacing:0.3px">8 个用法</div>
<svg class="a" style="left:606px;top:273px" width="12" height="12" viewBox="0 0 12 12"><circle cx="6" cy="4" r="2.5" fill="none" stroke="#7e7e7e" stroke-width="1"/><path d="M1.5 11.5 Q1.5 7.5 6 7.5 Q10.5 7.5 10.5 11.5 Z" fill="none" stroke="#7e7e7e" stroke-width="1"/></svg>
<div class="a hint" style="left:621px;top:272px;letter-spacing:0.55px">wangchen147 +1</div>
<div class="a hint" style="left:546px;top:492px;letter-spacing:0.3px">15 个用法</div>
<svg class="a" style="left:613px;top:493px" width="12" height="12" viewBox="0 0 12 12"><circle cx="6" cy="4" r="2.5" fill="none" stroke="#7e7e7e" stroke-width="1"/><path d="M1.5 11.5 Q1.5 7.5 6 7.5 Q10.5 7.5 10.5 11.5 Z" fill="none" stroke="#7e7e7e" stroke-width="1"/></svg>
<div class="a hint" style="left:628px;top:492px;letter-spacing:0.55px">wangchen147 +1</div>
<div class="a hint" style="left:738px;top:316px">0 个用法</div>
<div class="a hint" style="left:730px;top:360px">0 个用法</div>
<div class="a hint" style="left:730px;top:558px">0 个用法</div>
<div class="a hint" style="left:722px;top:602px">0 个用法</div>
<div class="a hint" style="left:738px;top:646px">0 个用法</div>
<div class="a hint" style="left:738px;top:690px">0 个用法</div>
<div class="a hint" style="left:730px;top:734px">0 个用法</div>
<div class="a hint" style="left:698px;top:778px">0 个用法</div>
<svg class="a" style="left:1029px;top:53px" width="14" height="14" viewBox="0 0 14 14"><path d="M7 3 L12.3 12 H1.7 Z" fill="#f0c050" stroke="#f0c050" stroke-width="2.4" stroke-linejoin="round"/><path d="M7 5.6 V8.8" stroke="#fff" stroke-width="1.6"/><rect x="6.2" y="10" width="1.6" height="1.5" fill="#fff"/></svg>
<div class="a" style="left:1045px;top:55px;font-size:12px;color:#4d4f57">8</div>
<svg class="a" style="left:1061px;top:55px" width="30" height="12" viewBox="0 0 28 12"><path d="M1 8 L5 4 L9 8" stroke="#818594" fill="none" stroke-width="1.1"/><path d="M22 4 L26 8 L30 4" stroke="#818594" fill="none" stroke-width="1.1"/></svg>
<div class="a" style="left:1090px;top:74px;width:2px;height:635px;background:#dcdcdc"></div>
<div class="a" style="left:1085px;top:708px;width:7px;height:2px;background:#b89cf0"></div>
<div class="a" style="left:1086px;top:141px;width:6px;height:2px;background:#c9a8f2"></div>
<div class="a" style="left:1085px;top:277px;width:7px;height:2px;background:#e8c12d"></div>
<div class="a" style="left:1085px;top:311px;width:7px;height:2px;background:#e8c12d"></div>
<div class="a" style="left:1085px;top:463px;width:7px;height:2px;background:#e8c12d"></div>
<div class="a" style="left:1085px;top:497px;width:7px;height:2px;background:#e8c12d"></div>
<div class="a" style="left:1085px;top:531px;width:7px;height:2px;background:#e8c12d"></div>
<div class="a" style="left:1085px;top:565px;width:7px;height:2px;background:#e8c12d"></div>
<div class="a" style="left:1085px;top:599px;width:7px;height:2px;background:#e8c12d"></div>
<div class="a" style="left:1085px;top:633px;width:7px;height:2px;background:#e8c12d"></div>
<div class="a" style="left:487px;top:288px;width:393px;height:29px;border:4px solid #fd5050;border-radius:3px"></div>
<div class="red" style="left:771px;top:254px">事件类，注意继承Event</div>
<div class="red" style="left:790px;top:344px">事件类与异步事件相同，定义调用事<br>件需要的参数</div>
<div class="red" style="left:808px;top:560px">事件结果类，注意继承EventResult</div>
<div class="red" style="left:805px;top:627px">事件结果定义了事件监听需要返回的<br>数据结构</div>
<div class="a" style="left:461px;top:854px;width:320px;height:10px;background:#dcdcdc"></div>
<div class="a" style="left:0;top:864px;width:1092px;height:1px;background:#e6e7eb"></div>
<div class="a" style="left:0;top:865px;width:1092px;height:1px;background:#f7f8fa"></div>
<div class="a" style="left:622px;top:863px;width:163px;height:1px;background:#e3def7"></div>
</body></html>
